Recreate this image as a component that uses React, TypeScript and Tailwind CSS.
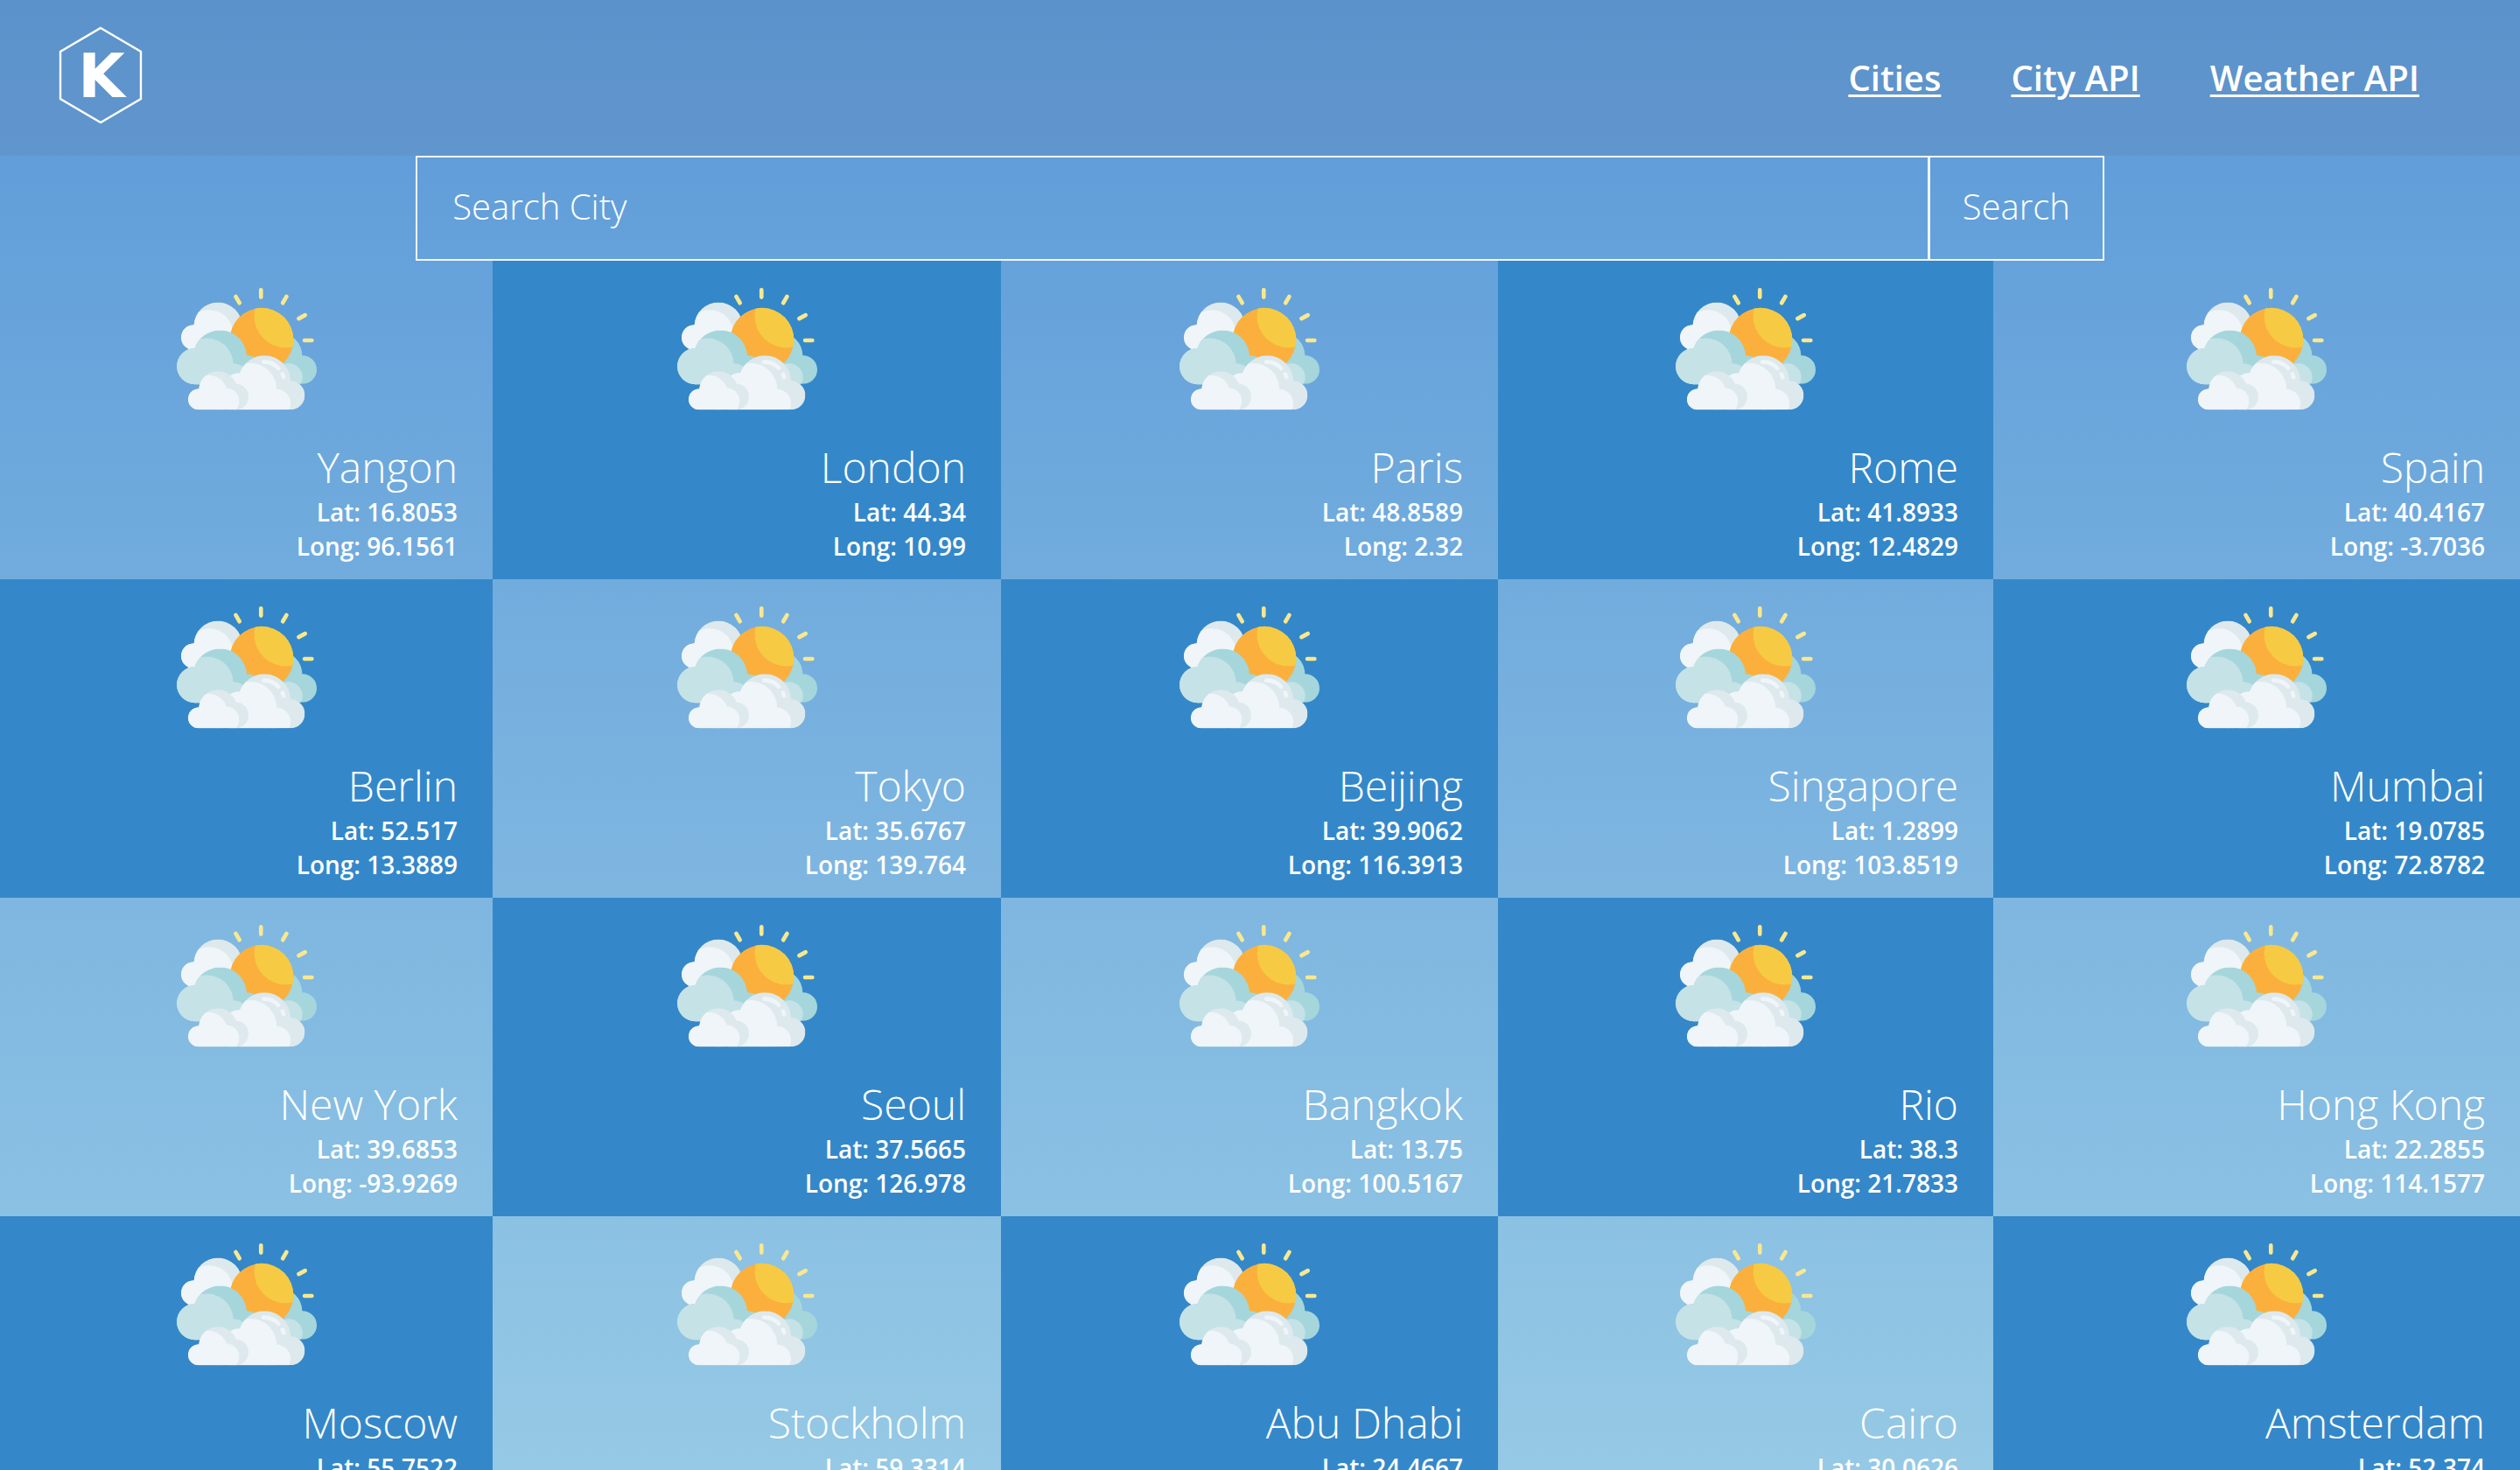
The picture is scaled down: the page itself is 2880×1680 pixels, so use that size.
type City = { name: string; lat: string; long?: string };

const cities: City[] = [
  { name: "Yangon", lat: "16.8053", long: "96.1561" },
  { name: "London", lat: "44.34", long: "10.99" },
  { name: "Paris", lat: "48.8589", long: "2.32" },
  { name: "Rome", lat: "41.8933", long: "12.4829" },
  { name: "Spain", lat: "40.4167", long: "-3.7036" },
  { name: "Berlin", lat: "52.517", long: "13.3889" },
  { name: "Tokyo", lat: "35.6767", long: "139.764" },
  { name: "Beijing", lat: "39.9062", long: "116.3913" },
  { name: "Singapore", lat: "1.2899", long: "103.8519" },
  { name: "Mumbai", lat: "19.0785", long: "72.8782" },
  { name: "New York", lat: "39.6853", long: "-93.9269" },
  { name: "Seoul", lat: "37.5665", long: "126.978" },
  { name: "Bangkok", lat: "13.75", long: "100.5167" },
  { name: "Rio", lat: "38.3", long: "21.7833" },
  { name: "Hong Kong", lat: "22.2855", long: "114.1577" },
  { name: "Moscow", lat: "55.7522" },
  { name: "Stockholm", lat: "59.3314" },
  { name: "Abu Dhabi", lat: "24.4667" },
  { name: "Cairo", lat: "30.0626" },
  { name: "Amsterdam", lat: "52.374" },
];

const links = ["Cities", "City API", "Weather API"];

function Logo() {
  return (
    <svg viewBox="0 0 96 112" className="h-28 w-24" role="img" aria-label="K">
      <path
        d="M48 3 L94 30 V84 L48 111 L2 84 V30 Z"
        fill="none"
        stroke="#fff"
        strokeWidth="2.4"
      />
      <text
        x="49"
        y="82"
        textAnchor="middle"
        fill="#fff"
        className="font-['DejaVu_Sans'] text-[69px] font-bold"
      >
        K
      </text>
    </svg>
  );
}

/* Shared shapes for every card's weather drawing. */
function WeatherDefs() {
  return (
    <svg className="absolute size-0" aria-hidden="true">
      <defs>
        <clipPath id="back-cloud">
          <circle cx="207" cy="188" r="83" />
          <circle cx="123" cy="226" r="43" />
          <rect x="123" y="188" width="90" height="81" />
        </clipPath>
        <clipPath id="sun-disc">
          <circle cx="357" cy="234" r="110" />
        </clipPath>
        <clipPath id="right-cloud">
          <circle cx="415" cy="290" r="82" />
          <circle cx="498" cy="337" r="49" />
          <rect x="400" y="300" width="98" height="86" />
        </clipPath>
        <clipPath id="mid-cloud">
          <circle cx="214" cy="293" r="92" />
          <circle cx="127" cy="325" r="62" />
          <circle cx="306" cy="350" r="62" />
          <rect x="127" y="300" width="180" height="87" />
        </clipPath>
        <clipPath id="front-cloud">
          <circle cx="367" cy="378" r="90" />
          <circle cx="456" cy="425" r="50" />
          <circle cx="278" cy="399" r="50" />
          <rect x="240" y="390" width="216" height="85" />
        </clipPath>
        <clipPath id="small-cloud">
          <circle cx="207" cy="408" r="66" />
          <circle cx="267" cy="430" r="45" />
          <circle cx="140" cy="439" r="36" />
          <rect x="140" y="408" width="127" height="67" />
        </clipPath>
        <symbol id="weather" viewBox="65 22 482 482">
          <g clipPath="url(#back-cloud)">
            <rect x="64" y="90" width="240" height="190" fill="#dee9ed" />
            <circle cx="176" cy="215" r="84" fill="#eff5f8" />
            <circle cx="123" cy="226" r="43" fill="#eff5f8" />
          </g>
          <g clipPath="url(#right-cloud)">
            <rect x="320" y="200" width="230" height="190" fill="#a5d6dc" />
            <circle cx="450" cy="363" r="48" fill="#c5e2e7" />
          </g>
          <g clipPath="url(#sun-disc)">
            <circle cx="357" cy="234" r="110" fill="#fbb03d" />
            <circle cx="440" cy="153" r="108" fill="#f6cb43" />
          </g>
          <g clipPath="url(#mid-cloud)">
            <rect x="60" y="190" width="320" height="200" fill="#a5d6dc" />
            <circle cx="168" cy="320" r="92" fill="#c5e2e7" />
            <circle cx="127" cy="325" r="63" fill="#c5e2e7" />
            <circle cx="258" cy="377" r="62" fill="#c5e2e7" />
          </g>
          <g clipPath="url(#front-cloud)">
            <rect x="220" y="280" width="300" height="200" fill="#dee9ed" />
            <circle cx="319" cy="404" r="90" fill="#eff5f8" />
            <circle cx="278" cy="399" r="50" fill="#eff5f8" />
            <circle cx="408" cy="453" r="49" fill="#eff5f8" />
            <rect x="240" y="420" width="170" height="60" fill="#eff5f8" />
          </g>
          <path
            d="M364 310 C385 309 402 317 415 332 M429 352 L433 363"
            fill="none"
            stroke="#eff5f8"
            strokeWidth="14"
            strokeLinecap="round"
          />
          <g clipPath="url(#small-cloud)">
            <rect x="100" y="340" width="215" height="140" fill="#dee9ed" />
            <circle cx="174" cy="422" r="66" fill="#eff5f8" />
            <circle cx="140" cy="439" r="36" fill="#eff5f8" />
            <circle cx="235" cy="445" r="45" fill="#eff5f8" />
            <rect x="140" y="440" width="90" height="40" fill="#eff5f8" />
          </g>
          <path
            d="M355 62 V87 M268 85 L281 107 M443 85 L430 107 M485 161 L507 149 M505 236 H530"
            fill="none"
            stroke="#f9e88f"
            strokeWidth="14"
            strokeLinecap="round"
          />
        </symbol>
      </defs>
    </svg>
  );
}

function CityCard({ city }: { city: City }) {
  return (
    <li className="flex min-h-[364px] flex-col px-10 pt-5 text-right even:bg-[#3488c9]">
      <svg className="size-40 self-center" aria-hidden="true">
        <use href="#weather" />
      </svg>
      <h2 className="mt-6 text-[48px] leading-[64px] font-light">{city.name}</h2>
      <p className="text-[28px] leading-[39px] font-semibold">Lat: {city.lat}</p>
      {city.long && (
        <p className="text-[28px] leading-[39px] font-semibold">Long: {city.long}</p>
      )}
    </li>
  );
}

export default function App() {
  return (
    <div className="h-screen overflow-y-auto bg-linear-to-b from-[#5b99d8] to-[#95c9e5] font-['Open_Sans',sans-serif] text-white [scrollbar-width:none]">
      <WeatherDefs />
      <header className="flex h-[178px] items-center justify-between bg-[#5f779b]/20 pr-[115px] pl-[67px]">
        <a href="#home" className="-mt-2">
          <Logo />
        </a>
        <nav className="flex gap-20">
          {links.map((link) => (
            <a
              key={link}
              href="#"
              className="text-[40px] leading-[56px] font-semibold underline decoration-[3px] underline-offset-4"
            >
              {link}
            </a>
          ))}
        </nav>
      </header>
      <main>
        <form className="mx-auto flex h-[120px] w-[67%] border-2 border-white/90">
          <input
            type="text"
            aria-label="Search City"
            placeholder="Search City"
            className="min-w-0 flex-1 bg-transparent px-10 pb-1 text-[40px] font-light outline-none placeholder:text-white"
          />
          <button
            type="button"
            className="w-[200px] border-l-3 border-white/90 pb-1 text-[40px] font-light"
          >
            Search
          </button>
        </form>
        <ul className="grid grid-cols-[563fr_581fr_568fr_566fr_602fr]">
          {cities.map((city) => (
            <CityCard key={city.name} city={city} />
          ))}
        </ul>
      </main>
    </div>
  );
}
